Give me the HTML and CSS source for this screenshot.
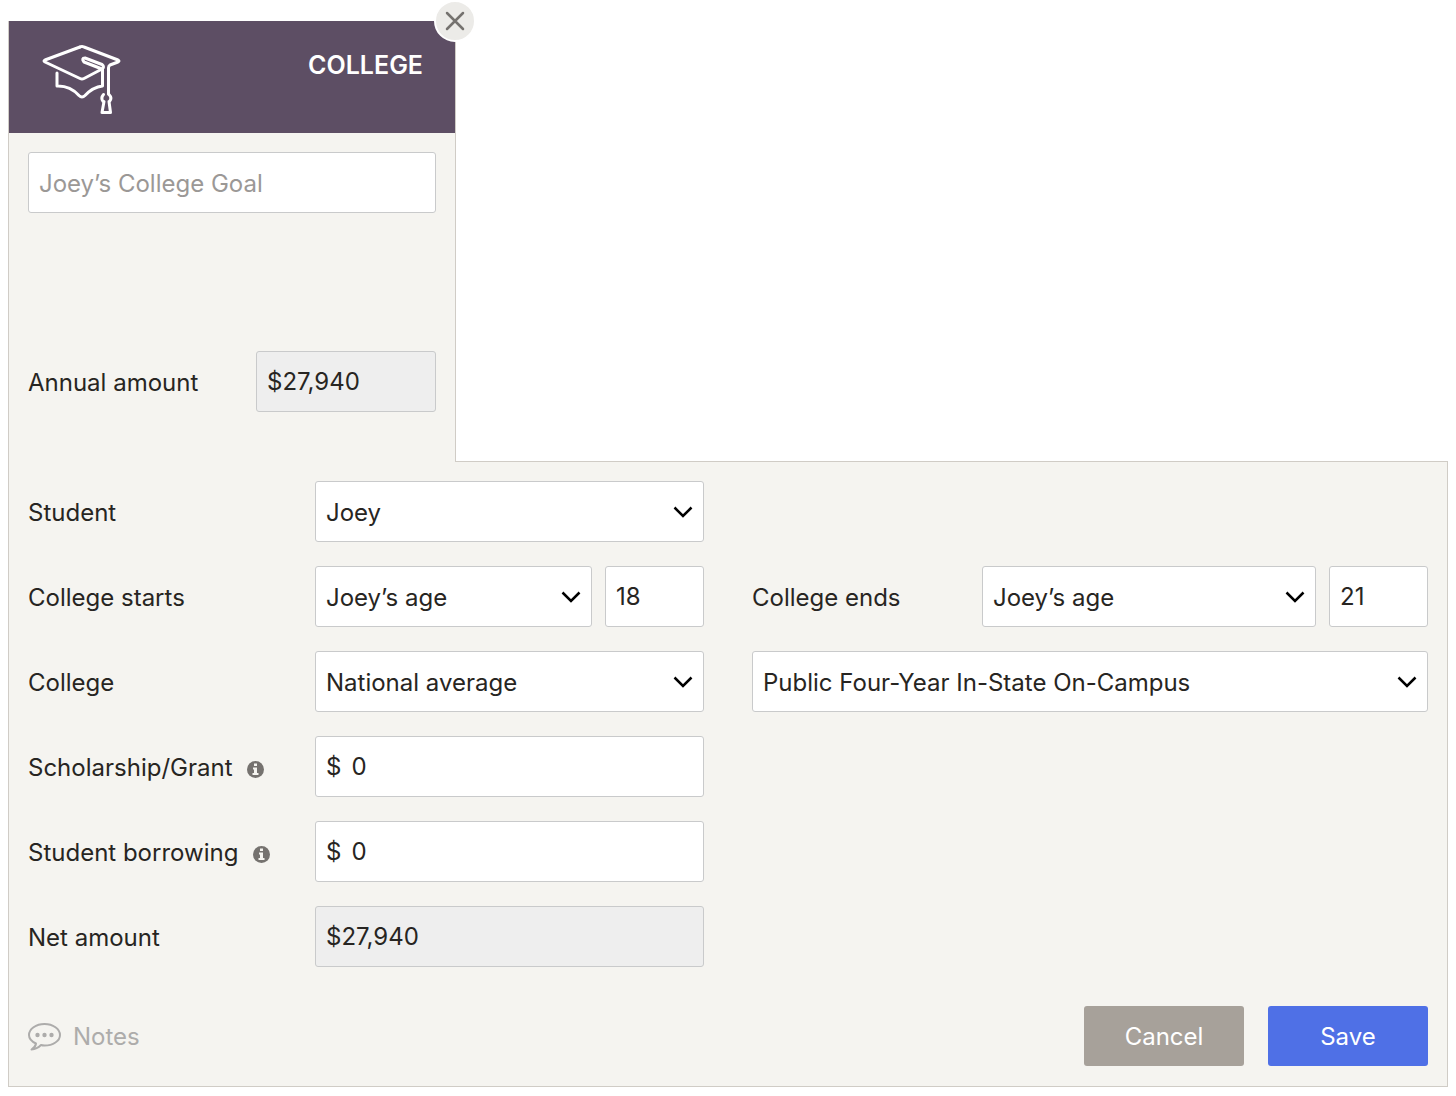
FILE: index.html
```
<!DOCTYPE html>
<html lang="en">
<head>
    <meta charset="UTF-8">
    <title>College goal</title>
    <link rel="stylesheet" href="styles.css">
</head>
<body>

<form class="goal">

    <section class="card">
        <button class="close" type="button" aria-label="Close">
            <svg width="20" height="20" viewBox="0 0 20 20">
                <path d="M2 2L18 18M18 2L2 18"/>
            </svg>
        </button>

        <header class="card-head">
            <svg class="cap" width="82" height="72" viewBox="0 0 82 72">
                <path d="M39 4Q41 3 43 4L77 17Q79 18 77 19L69 22Q67.500 23 67.500 25V51"/>
                <path d="M39 4L4 17Q2 18 4 19L39 35.500Q41 36.500 43 35.500L61 26"/>
                <path d="M44 15L61 21.500Q64 24 61 26L43 19Q40 15 44 15Z"/>
                <path d="M16 30V43Q29 42.500 38 52.500Q41 55.500 44 52.500Q52 44 61.500 43V26"/>
                <path d="M62.500 51.500Q59.500 55 62 58.500H63L61 69.500H69.500L68 58.500H68.500Q71.500 55 68 51.500"/>
            </svg>
            <h1>COLLEGE</h1>
        </header>

        <div class="card-body">
            <input class="field name" type="text" placeholder="Joey’s College Goal" aria-label="Goal name">
            <div class="annual">
                <label for="annual">Annual amount</label>
                <input class="field" id="annual" type="text" value="$27,940" readonly>
            </div>
        </div>
    </section>

    <section class="panel">
        <div class="rows">
            <div class="row">
                <label for="student">Student</label>
                <select class="field" id="student">
                    <option>Joey</option>
                </select>
            </div>

            <div class="row start">
                <label for="starts">College starts</label>
                <div class="pair">
                    <select class="field" id="starts">
                        <option>Joey’s age</option>
                    </select>
                    <input class="field" type="text" value="18" aria-label="Start age">
                </div>
            </div>
            <div class="row ends">
                <label for="ends">College ends</label>
                <div class="pair">
                    <select class="field" id="ends">
                        <option>Joey’s age</option>
                    </select>
                    <input class="field" type="text" value="21" aria-label="End age">
                </div>
            </div>

            <div class="row start">
                <label for="college">College</label>
                <select class="field" id="college">
                    <option>National average</option>
                </select>
            </div>
            <select class="field" aria-label="College type">
                <option>Public Four-Year In-State On-Campus</option>
            </select>

            <div class="row start">
                <label for="grant">Scholarship/Grant
                    <svg class="info" width="17" height="17" viewBox="0 0 17 17">
                        <circle cx="8.500" cy="8.500" r="8.500"/>
                        <path d="M7 2.500H10V5H7ZM6 6.500H10V12H11.500V14H5.500V12H7V8.500H6Z"/>
                    </svg>
                </label>
                <div class="field money">
                    <span>$</span>
                    <input id="grant" type="text" value="0">
                </div>
            </div>

            <div class="row start">
                <label for="borrowing">Student borrowing
                    <svg class="info" width="17" height="17" viewBox="0 0 17 17">
                        <circle cx="8.500" cy="8.500" r="8.500"/>
                        <path d="M7 2.500H10V5H7ZM6 6.500H10V12H11.500V14H5.500V12H7V8.500H6Z"/>
                    </svg>
                </label>
                <div class="field money">
                    <span>$</span>
                    <input id="borrowing" type="text" value="0">
                </div>
            </div>

            <div class="row start">
                <label for="net">Net amount</label>
                <input class="field" id="net" type="text" value="$27,940" readonly>
            </div>
        </div>

        <footer class="actions">
            <button class="notes" type="button">
                <svg width="33" height="28" viewBox="0 0 33 28">
                    <path d="M8 20.500C3.500 18.500 1 15.500 1 12C1 6 8 1 16.500 1S32 6 32 12S25 22.500 16.500 22.500Q14.500 22.500 13 22Q9 26 3.500 26.500Q7.500 24 8 20.500Z"/>
                    <circle cx="9.500" cy="12" r="2.200"/>
                    <circle cx="16.500" cy="12" r="2.200"/>
                    <circle cx="23.500" cy="12" r="2.200"/>
                </svg>
                Notes
            </button>
            <button class="btn cancel" type="button">Cancel</button>
            <button class="btn save" type="submit">Save</button>
        </footer>
    </section>

</form>

</body>
</html>
```
FILE: styles.css
```
*{
    box-sizing: border-box;
}

body{
    margin: 0;
    padding: 21px 8px 8px;
    background-color: #ffffff;
    color: #272522;
    font-family: Inter, "Liberation Sans", sans-serif;
    font-size: 24px;
    line-height: 32px;
}

input, select, button{
    font: inherit;
    color: inherit;
}

/* top card, its foot covers the panel's top border */
.card{
    position: relative;
    width: 448px;
    margin-bottom: -1px;
    border: solid #d0ccc6;
    border-width: 0 1px;
    background-color: #f5f4f0;
}

.close{
    position: absolute;
    top: -21px;
    right: -21px;
    width: 42px;
    height: 42px;
    padding: 0;
    display: grid;
    place-items: center;
    border: 2px solid #ffffff;
    border-radius: 50%;
    background-color: #ecebe8;
}
.close svg{
    fill: none;
    stroke: #75726f;
    stroke-width: 2.5;
    stroke-linecap: round;
}

.card-head{
    display: flex;
    justify-content: space-between;
    height: 112px;
    padding: 22px 32px;
    background-color: #5d4e64;
    color: #ffffff;
}
.cap{
    fill: none;
    stroke: #ffffff;
    stroke-width: 3;
    stroke-linecap: round;
    stroke-linejoin: round;
}
h1{
    margin: 6px 0 0;
    font-size: 25px;
    font-weight: 600;
}

.card-body{
    padding: 19px 19px 50px;
}
.annual{
    display: flex;
    align-items: center;
    justify-content: space-between;
    margin-top: 138px;
}
.annual .field{
    width: 180px;
}

label{
    padding-top: 2px;
}

.field{
    display: block;
    width: 100%;
    min-width: 0;
    height: 61px;
    padding: 0 10px;
    border: 1px solid #c9cacb;
    border-radius: 3px;
    background-color: #ffffff;
}
.field::placeholder{
    color: #9b9896;
    opacity: 1;
}
.field[readonly]{
    background-color: #eeeeee;
}
.name{
    padding-top: 2px;
}
select.field{
    appearance: none;
    padding-top: 2px;
    padding-right: 40px;
    background-image: url("data:image/svg+xml,%3Csvg xmlns='http://www.w3.org/2000/svg' width='20' height='12' viewBox='0 0 20 12'%3E%3Cpath d='M1.500 1.500L10 10L18.500 1.500' fill='none' stroke='%23000' stroke-width='2.500'/%3E%3C/svg%3E");
    background-repeat: no-repeat;
    background-position: right 10px center;
}

.panel{
    padding: 19px 19px 20px;
    border: 1px solid #d0ccc6;
    background-color: #f5f4f0;
}
.rows{
    display: grid;
    grid-template-columns: 1fr 1fr;
    gap: 24px 48px;
}
.row{
    display: grid;
    grid-template-columns: 287px 1fr;
    align-items: center;
}
.start{
    grid-column: 1;
}
.ends{
    grid-template-columns: 230px 1fr;
}
.pair{
    display: grid;
    grid-template-columns: 1fr 99px;
    gap: 13px;
}

.money{
    display: flex;
    align-items: center;
    gap: 10px;
}
.money input{
    flex: 1;
    min-width: 0;
    padding: 0;
    border: 0;
    background: none;
}

.info{
    margin-left: 8px;
    vertical-align: -2px;
    fill: #75726f;
}
.info path{
    fill: #f5f4f0;
}

.actions{
    display: flex;
    align-items: center;
    gap: 24px;
    margin-top: 39px;
}
.notes{
    display: flex;
    align-items: center;
    gap: 12px;
    margin-right: auto;
    padding: 2px 0 0;
    border: 0;
    background: none;
    color: #adacab;
}
.notes svg{
    fill: none;
    stroke: currentColor;
    stroke-width: 2;
    stroke-linejoin: round;
}
.notes circle{
    fill: currentColor;
    stroke: none;
}
.btn{
    width: 160px;
    height: 60px;
    padding: 2px 0 0;
    border: 0;
    border-radius: 3px;
    color: #ffffff;
}
.cancel{
    background-color: #a7a19a;
}
.save{
    background-color: #4f70e6;
}
```
